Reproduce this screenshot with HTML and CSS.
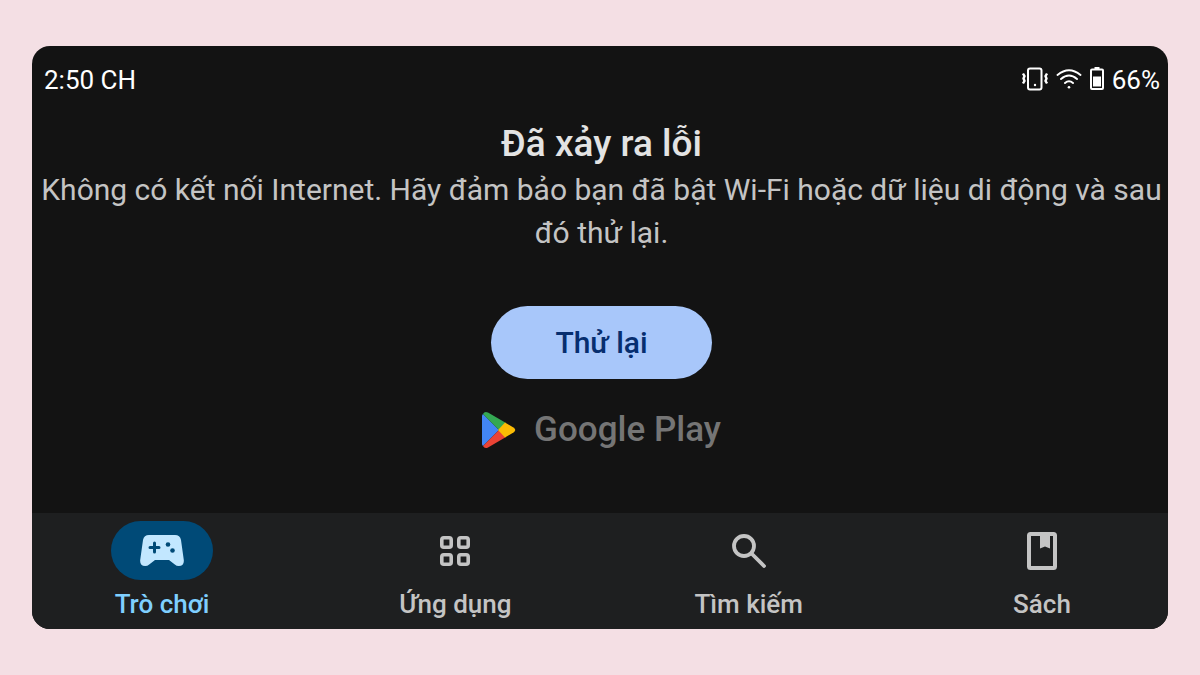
FILE: index.html
```html
<!DOCTYPE html>
<html lang="vi">
<head>
<meta charset="utf-8">
<meta name="viewport" content="width=device-width, initial-scale=1">
<title>Google Play</title>
<link rel="stylesheet" href="styles.css">
</head>
<body>
<div class="screen">
  <header class="status">
    <time class="clock">2:50 CH</time>
    <div class="indicators">
      <svg class="vibrate" viewBox="0 0 26 24" width="26" height="24" fill="none" stroke="currentColor" stroke-width="2" aria-hidden="true">
        <rect x="6" y="1.500" width="13.500" height="21" rx="2"/>
        <circle cx="13" cy="18" r="1.200" fill="currentColor" stroke="none"/>
        <path d="M1 6.500l1.500 2.500-1 2.500 1 2.500L1 16.500M25 6.500L23.500 9l1 2.500-1 2.500 1.500 2.500" stroke-width="2.400"/>
      </svg>
      <svg class="wifi" viewBox="0 0 26 20" width="26" height="20" fill="none" stroke="currentColor" stroke-width="1.900" stroke-linecap="round" aria-hidden="true">
        <path d="M1.500 6Q13-3.500 24.500 6M5 10Q13 3 21 10M9 14Q13 10.500 17 14"/>
        <circle cx="13" cy="18.200" r="1.300" fill="currentColor" stroke="none"/>
      </svg>
      <svg class="battery" viewBox="0 0 14 23" width="14" height="23" aria-hidden="true">
        <path d="M4.500 0h5v2h-5z" fill="currentColor"/>
        <rect x="1" y="2.500" width="12" height="19.500" rx="1" fill="none" stroke="currentColor" stroke-width="2"/>
        <path d="M3 9.500h8v10H3z" fill="currentColor"/>
      </svg>
      <span class="percent">66%</span>
    </div>
  </header>
  <main class="error">
    <h1 class="title">Đã xảy ra lỗi</h1>
    <p class="message">Không có kết nối Internet. Hãy đảm bảo bạn đã bật Wi-Fi hoặc dữ liệu di động và sau đó thử lại.</p>
    <button class="retry" type="button">Thử lại</button>
    <div class="brand">
      <svg viewBox="0 0 34 38" width="34" height="38" aria-hidden="true">
        <path d="M1 3Q0 4 0 5v28q0 1 1 2L17 19z" fill="#4285f4"/>
        <path d="M1 3Q2.500 0 6 1.500L24 12l-7 7z" fill="#34a853"/>
        <path d="M1 35q1.500 3 5 1.500L24 26l-7-7z" fill="#ea4335"/>
        <path d="M23 11.500l8.500 5q3.500 2.500 0 5l-8.500 5L16 19z" fill="#fbbc04"/>
      </svg>
      <span class="wordmark">Google Play</span>
    </div>
  </main>
  <nav class="tabs">
    <a class="tab active" href="#games" aria-current="page">
      <span class="pill"><svg viewBox="0 0 44 32" width="44" height="32" aria-hidden="true">
        <path d="M9 0h26q5 0 6 5l2.800 20q.5 6-5 6-2.300 0-4-1.500L29 25H15l-5.800 4.500Q7.500 31 5.200 31q-5.500 0-5-6L3 5q1-5 6-5z" fill="currentColor"/>
        <path d="M14.500 8v9M10 12.500h9" stroke="#004a77" stroke-width="3" stroke-linecap="round"/>
        <circle cx="28" cy="9.500" r="2.300" fill="#004a77"/><circle cx="32.500" cy="15.500" r="2.300" fill="#004a77"/>
      </svg></span>
      <span class="label">Trò chơi</span>
    </a>
    <a class="tab" href="#apps">
      <span class="pill"><svg viewBox="0 0 30 30" width="30" height="30" fill="none" stroke="currentColor" stroke-width="3.600" aria-hidden="true">
        <rect x="1.800" y="1.800" width="9.400" height="9.400" rx="2"/><rect x="18.800" y="1.800" width="9.400" height="9.400" rx="2"/>
        <rect x="1.800" y="18.800" width="9.400" height="9.400" rx="2"/><rect x="18.800" y="18.800" width="9.400" height="9.400" rx="2"/>
      </svg></span>
      <span class="label">Ứng dụng</span>
    </a>
    <a class="tab" href="#search">
      <span class="pill"><svg viewBox="0 0 34 34" width="34" height="34" fill="none" stroke="currentColor" stroke-width="3.800" aria-hidden="true">
        <circle cx="12" cy="12" r="10"/><path d="M19.500 19.500L32 32" stroke-linecap="round"/>
      </svg></span>
      <span class="label">Tìm kiếm</span>
    </a>
    <a class="tab" href="#books">
      <span class="pill"><svg viewBox="0 0 30 38" width="30" height="38" aria-hidden="true">
        <rect x="2" y="2" width="26" height="34" rx="1.500" fill="none" stroke="currentColor" stroke-width="4"/>
        <path d="M13 3h10v13.500l-5-2-5 2z" fill="currentColor"/>
      </svg></span>
      <span class="label">Sách</span>
    </a>
  </nav>
</div>
</body>
</html>
```
FILE: styles.css
```css
* { box-sizing: border-box; }
body {
  margin: 0;
  min-height: 100vh;
  padding: 46px 32px;
  display: flex;
  background: #f4dfe4;
  font-family: Roboto, "Noto Sans", sans-serif;
}
.screen {
  flex: 1;
  display: flex;
  flex-direction: column;
  overflow: hidden;
  border-radius: 18px;
  background: #131313;
  color: #c4c4c4;
}
.status {
  display: flex;
  align-items: center;
  justify-content: space-between;
  padding: 18px 8px 0 12px;
  color: #fff;
  font-size: 26px;
  line-height: 32px;
}
.indicators { display: flex; align-items: center; gap: 8px; }
.indicators svg { margin-bottom: 3px; }
.error {
  flex: 1;
  display: flex;
  flex-direction: column;
  align-items: center;
  padding: 24px 0 24px 3px;
  text-align: center;
}
.title {
  margin: 0;
  color: #e3e3e3;
  font-size: 37px;
  font-weight: 500;
  line-height: 48px;
}
.message { margin: 0; font-size: 30px; line-height: 43px; }
.retry {
  margin-top: 52px;
  padding: 0 64px;
  height: 73px;
  border: 0;
  border-radius: 37px;
  background: #a8c7fa;
  color: #062e6f;
  font: 500 30px Roboto, "Noto Sans", sans-serif;
}
.brand { display: flex; align-items: center; gap: 18px; margin-top: 28px; }
.wordmark { color: #757575; font-size: 35px; font-weight: 500; line-height: 46px; }
.tabs {
  display: flex;
  justify-content: space-between;
  padding: 8px 59px 8px 63px;
  background: #1e1f20;
}
.tab {
  width: 134px;
  display: flex;
  flex-direction: column;
  align-items: center;
  gap: 8px;
  color: #c4c4c4;
  text-decoration: none;
}
.pill {
  display: flex;
  align-items: center;
  justify-content: center;
  width: 102px;
  height: 59px;
  border-radius: 30px;
}
.active .pill { background: #004a77; color: #c2e7ff; }
.active { color: #7fcfff; }
.label { font-size: 26px; font-weight: 500; line-height: 33px; white-space: nowrap; }
```
